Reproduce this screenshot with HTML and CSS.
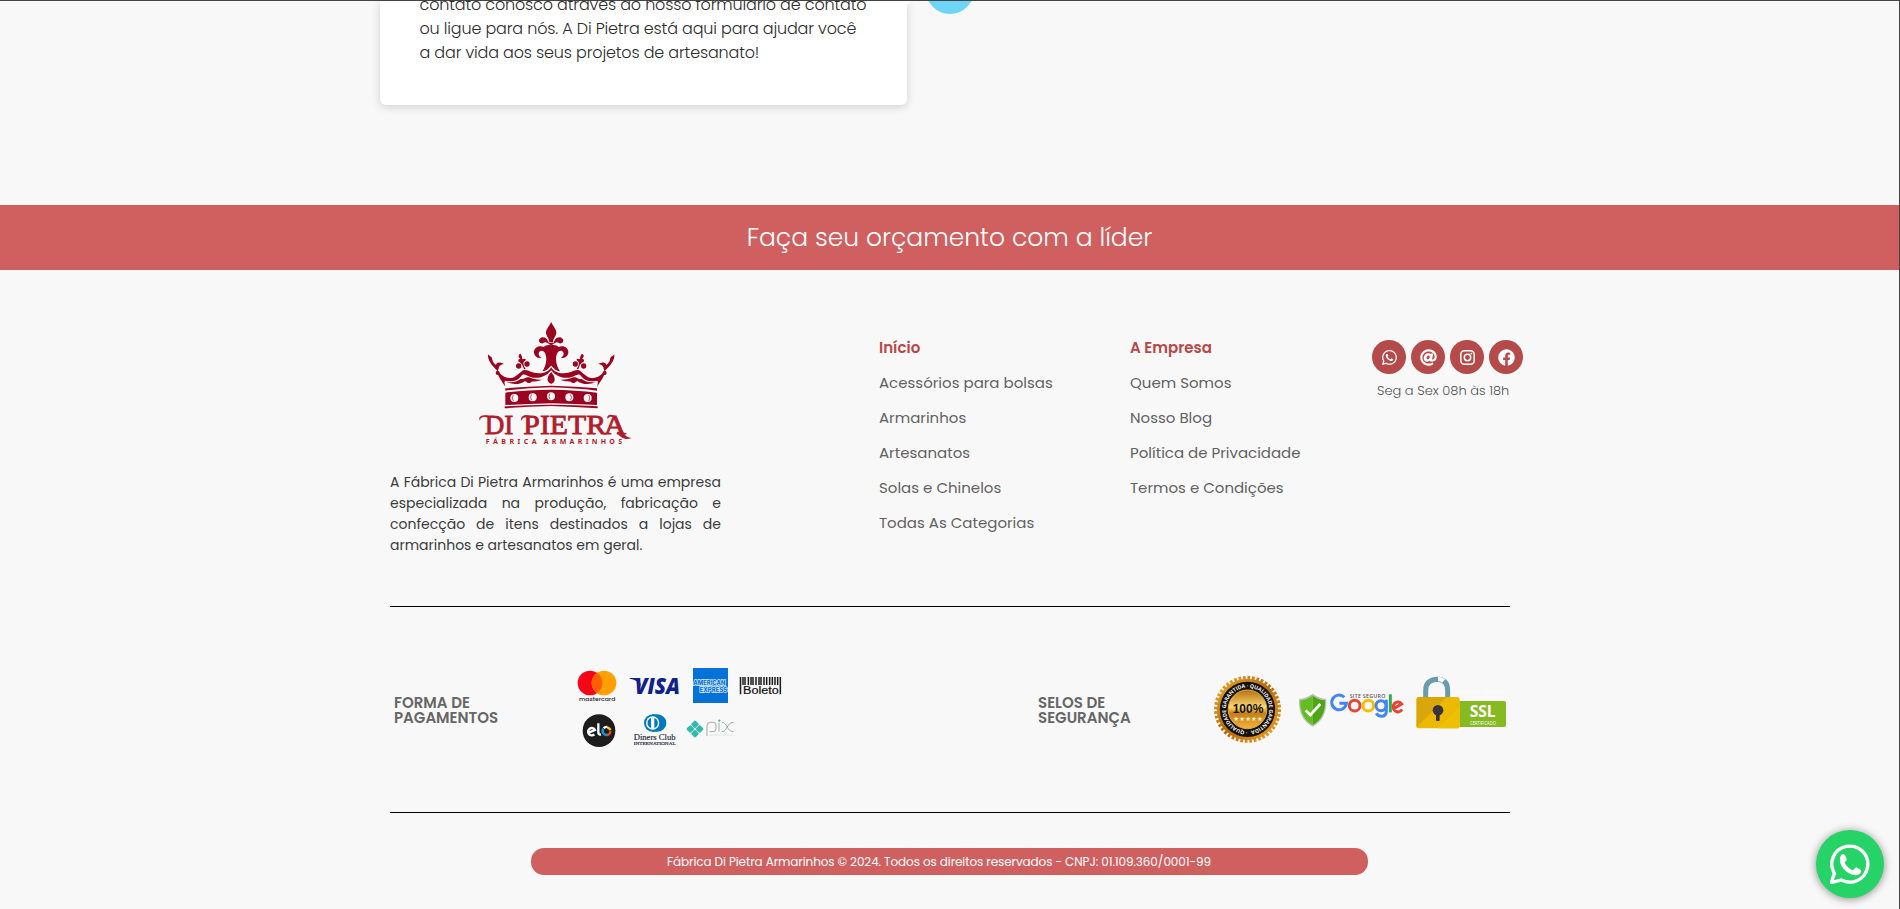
FILE: index.html
```html
<!DOCTYPE html>
<html lang="pt-BR">
<head>
<meta charset="utf-8">
<title>Di Pietra Armarinhos</title>
<link rel="stylesheet" href="styles.css">
</head>
<body>
<div class="page">
  <section class="timeline">
    <div class="card">
      <p>contato conosco através do nosso formulário de contato<br>ou ligue para nós. A Di Pietra está aqui para ajudar você<br>a dar vida aos seus projetos de artesanato!</p>
    </div>
    <i class="arrow"></i>
    <i class="dot"></i>
  </section>

  <section class="banner"><h2>Faça seu orçamento com a líder</h2></section>

  <footer class="footer">
    <div class="top">
      <div class="about">
        <svg class="logo" viewBox="0 0 570 450" width="190" height="150">
          <defs>
            <g id="half" fill="#9a0420">
              <path d="M274 36C266 50 257 60 258 70C260 80 267 84 268 97H274Z"/>
              <path d="M274 106C266 104 262 96 256 97C250 98 248 103 240 98C234 93 238 84 247 82C259 81 263 91 266 98L274 99Z"/>
              <path d="M274 106C264 104 256 106 252 111C240 105 224 110 222 124C221 138 232 147 245 143C235 140 233 128 241 123C252 118 259 132 259 148C258 164 254 174 247 184C259 183 266 176 274 166Z"/>
              <path d="M274 186C264 195 261 207 264 214C266 219 270 221 274 221Z"/>
              <path d="M274 172C266 184 254 190 236 190C214 190 203 177 190 181C180 186 172 199 158 203C137 207 124 198 113 181L109 184C114 196 124 214 136 230C133 220 132 214 136 212C154 216 172 214 182 200C192 185 202 201 220 203C240 205 258 200 274 180Z"/>
              <path d="M183 206C192 210 196 199 207 202C220 207 230 210 246 209C230 216 214 212 209 218C201 221 198 210 192 215C178 224 156 224 140 216C158 218 172 215 183 206Z"/>
              <path d="M113 183C96 168 82 150 84 133C91 142 96 138 97 149C98 155 102 160 108 165C109 157 118 154 132 162C120 164 116 170 116 177Z"/>
              <circle cx="113" cy="189" r="6"/>
              <circle cx="176" cy="168" r="8"/><circle cx="201" cy="162" r="8"/><circle cx="207" cy="212" r="7"/>
              <path d="M192 178C188 164 185 160 176 155C172 149 178 145 182 148C175 140 173 136 181 131C188 139 185 142 188 148C196 143 201 149 194 153C187 159 191 166 197 177Z"/>
              <path d="M136 235Q200 229 274 227V232Q200 234 136 242Z"/>
              <path d="M136 248Q200 240 274 239V280Q200 282 136 285Z"/>
              <path d="M134 289Q200 285 274 284V288Q200 290 134 295Z"/>
            </g>
          </defs>
          <use href="#half"/><use href="#half" transform="translate(547 0) scale(-1 1)"/>
          <g fill="#f8f8f8"><circle cx="163" cy="264" r="12"/><circle cx="218" cy="262" r="12"/><circle cx="273" cy="259" r="12"/><circle cx="328" cy="262" r="12"/><circle cx="383" cy="264" r="12"/></g>
          <g fill="none" stroke="#9a0420" stroke-width="2"><path d="M160 255q-7 9 0 18M215 253q-7 9 0 18M270 250q-7 9 0 18M331 253q7 9 0 18M386 255q7 9 0 18"/></g>
          <g fill="#b21c2a" font-family="Liberation Serif, serif">
            <g font-size="84" stroke="#b21c2a" stroke-width="2.500">
              <text x="74" y="373" textLength="86" lengthAdjust="spacingAndGlyphs">DI</text>
              <text x="190" y="373" textLength="248" lengthAdjust="spacingAndGlyphs">PIETR</text>
              <text x="432" y="373" textLength="66" lengthAdjust="spacingAndGlyphs">A</text>
            </g>
            <path d="M84 317C66 312 52 320 60 332C60 322 70 319 84 321ZM208 317C192 312 178 322 185 332C188 322 196 319 208 321ZM466 318C450 311 438 315 443 327C448 318 456 320 466 324ZM470 366C484 388 500 390 515 384C500 382 492 374 488 362Z"/>
            <text x="77" y="402" font-size="21" font-weight="700" font-family="Noto Sans, sans-serif" textLength="153">FÁBRICA</text>
            <text x="251" y="402" font-size="21" font-weight="700" font-family="Noto Sans, sans-serif" textLength="235">ARMARINHOS</text>
          </g>
        </svg>
        <p>A Fábrica Di Pietra Armarinhos é uma empresa especializada na produção, fabricação e confecção de itens destinados a lojas de armarinhos e artesanatos em geral.</p>
      </div>
      <ul class="links first">
        <li class="head">Início</li>
        <li>Acessórios para bolsas</li>
        <li>Armarinhos</li>
        <li>Artesanatos</li>
        <li>Solas e Chinelos</li>
        <li>Todas As Categorias</li>
      </ul>
      <ul class="links second">
        <li class="head">A Empresa</li>
        <li>Quem Somos</li>
        <li>Nosso Blog</li>
        <li>Política de Privacidade</li>
        <li>Termos e Condições</li>
      </ul>
      <div class="contact">
        <div class="social">
          <a><svg viewBox="0 0 448 512" width="15" height="17"><path d="M380.900 97.100C339 55.100 283.200 32 223.900 32c-122.400 0-222 99.600-222 222 0 39.100 10.200 77.300 29.600 111L0 480l117.700-30.900c32.400 17.700 68.900 27 106.100 27h.1c122.300 0 224.100-99.600 224.100-222 0-59.300-25.200-115-67.100-157zm-157 341.600c-33.200 0-65.700-8.900-94-25.700l-6.700-4-69.800 18.300L72 359.200l-4.400-7c-18.500-29.400-28.200-63.300-28.200-98.200 0-101.700 82.800-184.500 184.600-184.500 49.300 0 95.600 19.200 130.400 54.100 34.800 34.900 56.200 81.200 56.100 130.500 0 101.800-84.900 184.600-186.600 184.600zm101.200-138.200c-5.500-2.800-32.800-16.200-37.900-18-5.100-1.900-8.800-2.800-12.500 2.800-3.700 5.600-14.300 18-17.600 21.800-3.200 3.700-6.500 4.200-12 1.400-32.600-16.300-54-29.100-75.500-66-5.700-9.800 5.700-9.100 16.300-30.300 1.800-3.700.9-6.900-.5-9.700-1.400-2.800-12.500-30.100-17.100-41.200-4.500-10.800-9.100-9.300-12.500-9.500-3.200-.2-6.900-.2-10.600-.2-3.700 0-9.700 1.400-14.800 6.900-5.100 5.600-19.400 19-19.400 46.300 0 27.300 19.900 53.700 22.600 57.400 2.800 3.700 39.100 59.700 94.800 83.800 35.200 15.200 49 16.500 66.600 13.900 10.700-1.600 32.800-13.400 37.400-26.400 4.600-13 4.600-24.100 3.200-26.400-1.300-2.500-5-3.900-10.500-6.600z"/></svg></a>
          <a><svg viewBox="0 0 512 512" width="17" height="17"><path d="M256 8C118.941 8 8 118.919 8 256c0 137.058 110.919 248 248 248 48.154 0 95.342-14.140 135.408-40.223 12.005-7.815 14.625-24.288 5.552-35.372l-10.177-12.433c-7.671-9.371-21.179-11.667-31.373-5.129C325.920 429.757 291.314 440 256 440c-101.458 0-184-82.542-184-184S154.542 72 256 72c100.139 0 184 57.619 184 160 0 38.786-21.093 79.742-58.170 83.693-17.349-.454-16.910-12.857-13.476-30.024l23.433-121.110C394.653 149.750 383.308 136 368.225 136h-44.981a13.518 13.518 0 0 0-13.432 11.993l-.01.092c-14.697-17.901-40.448-21.775-59.971-21.775-74.580 0-137.831 62.234-137.831 151.460 0 65.303 36.785 105.870 96 105.870 26.984 0 57.369-15.637 74.991-38.333 9.522 34.104 40.613 34.104 70.671 34.104C462.609 379.410 504 307.798 504 232 504 95.653 394.023 8 256 8zm-21.680 304.430c-22.249 0-36.070-15.623-36.070-40.771 0-44.993 30.779-72.729 58.624-72.729 22.292 0 35.601 15.241 35.601 40.770 0 45.061-33.875 72.730-58.155 72.730z"/></svg></a>
          <a><svg viewBox="0 0 17 17" width="17" height="17"><rect x="1.800" y="1.800" width="13.400" height="13.400" rx="3.700" fill="none" stroke="#fff" stroke-width="1.500"/><circle cx="8.500" cy="8.500" r="3.200" fill="none" stroke="#fff" stroke-width="1.500"/><circle cx="12.400" cy="4.600" r=".95"/></svg></a>
          <a><svg viewBox="0 0 512 512" width="17" height="17"><path d="M504 256C504 119 393 8 256 8S8 119 8 256c0 123.780 90.690 226.380 209.250 245V327.690h-63V256h63v-54.640c0-62.150 37-96.480 93.670-96.480 27.140 0 55.520 4.840 55.520 4.840v61h-31.280c-30.800 0-40.410 19.120-40.410 38.730V256h68.780l-11 71.690h-57.780V501C413.310 482.380 504 379.780 504 256z"/></svg></a>
        </div>
        <p>Seg a Sex 08h às 18h</p>
      </div>
    </div>

    <div class="trust">
      <h4 class="pay">FORMA DE<br>PAGAMENTOS</h4>
      <div class="methods">
        <div class="row">
          <svg viewBox="45 30 144 120" width="48" height="40"><circle cx="90" cy="84" r="37" fill="#f60519"/><circle cx="132" cy="84" r="37" fill="#ffa000"/><path d="M111 53.500a37 37 0 0 1 0 61a37 37 0 0 1 0-61" fill="#ff5f00"/><text x="57" y="137" font-size="17" font-weight="500" font-family="Poppins" textLength="109" lengthAdjust="spacingAndGlyphs" fill="#222">mastercard</text></svg>
          <svg viewBox="189 30 189 120" width="63" height="40"><g fill="#10228a"><text x="224" y="116" font-size="67" font-weight="800" font-style="italic" font-family="Open Sans" textLength="136" lengthAdjust="spacingAndGlyphs">VISA</text><path d="M209 69H237L244 96C239 83 228 74 209 71Z"/></g></svg>
          <svg viewBox="378 30 144 120" width="48" height="40"><rect x="399" y="39" width="105" height="105" fill="#0672d7"/><g font-family="Inter" font-weight="800" font-size="18" fill="#0672d7" stroke="#d8edff" stroke-width="4" paint-order="stroke"><text x="400" y="89" textLength="96" lengthAdjust="spacingAndGlyphs">AMERICAN</text><text x="419" y="111" textLength="83" lengthAdjust="spacingAndGlyphs">EXPRESS</text></g></svg>
          <svg viewBox="522 30 156 120" width="52" height="40"><path d="M541.500 66v52M549 66v24M555 66v24M565 66v24M573 66v24M579 66v24M588 66v24M597 66v24M603 66v24M612 66v24M620 66v24M629 66v24M637 66v24M645 66v24M653 66v24M661 66v52" stroke="#1b1b1b" stroke-width="4.500"/><text x="549" y="117" font-size="34" font-family="Liberation Sans" textLength="107" lengthAdjust="spacingAndGlyphs" fill="#111" stroke="#111" stroke-width=".7">Boleto</text></svg>
        </div>
        <div class="row">
          <svg viewBox="45 165 150 120" width="50" height="40"><circle cx="117" cy="227" r="49" fill="#1d1d1d"/><g fill="none" stroke-width="7"><path d="M86 233L105 225A11 11 0 1 0 103 238M115 205V232Q115 240 123 238" stroke="#fff"/><path d="M131 220A12 12 0 0 1 142 216" stroke="#fff"/><path d="M141 217A12 12 0 0 1 151 226" stroke="#ffcb05"/><path d="M151 228A12 12 0 0 1 140 240" stroke="#ef4123"/><path d="M141 240A12 12 0 0 1 130 221" stroke="#00a4e0"/></g></svg>
          <svg viewBox="195 165 177 120" width="59" height="40"><path d="M277 178H291A27 25 0 0 1 291 230H277Z" fill="#0079be"/><ellipse cx="279" cy="204" rx="27" ry="26" fill="#0079be"/><circle cx="278" cy="204" r="20" fill="#f8f8f8"/><path d="M273 189a16 16 0 0 0 0 30zM283 189a16 16 0 0 1 0 30z" fill="#0079be"/><g font-family="Liberation Serif" fill="#202a3a" stroke="#202a3a" stroke-width=".5"><text x="221" y="254" font-size="27" textLength="126" lengthAdjust="spacingAndGlyphs">Diners Club</text><text x="221" y="270" font-size="14" textLength="126" lengthAdjust="spacingAndGlyphs">INTERNATIONAL</text></g></svg>
          <svg viewBox="372 165 168 120" width="56" height="40"><g fill="#2fbaad"><rect x="396" y="199" width="18" height="18" rx="4" transform="rotate(45 405 208)"/><rect x="396" y="227" width="18" height="18" rx="4" transform="rotate(45 405 236)"/><rect x="382" y="213" width="18" height="18" rx="4" transform="rotate(45 391 222)"/><rect x="410" y="213" width="18" height="18" rx="4" transform="rotate(45 419 222)"/></g><path d="M441 243V212Q441 202 451 202H460Q468 202 468 210V221Q468 230 460 230H449M477 204V230M485 202Q492 201 496 207L506 223Q512 230 521 230M485 230Q492 231 496 225L506 209Q512 202 521 202" fill="none" stroke="#a5a8a9" stroke-width="3"/><path d="M474 197l4-4 4 4-4 4z" fill="#2fbaad"/><path d="M449 240h72" stroke="#cdd0d0" stroke-width="2" stroke-dasharray="3 1"/></svg>
        </div>
      </div>
      <h4 class="safe">SELOS DE<br>SEGURANÇA</h4>
      <div class="seals">
        <svg viewBox="30 0 240 285" width="80" height="95">
          <defs>
            <linearGradient id="gold" x2="1" y2="1"><stop offset="0" stop-color="#f0a822"/><stop offset=".5" stop-color="#b4690d"/><stop offset="1" stop-color="#f2a61e"/></linearGradient>
            <linearGradient id="disc" x2="0" y2="1"><stop offset="0" stop-color="#b8700f"/><stop offset=".45" stop-color="#f8d876"/><stop offset=".6" stop-color="#c67d17"/><stop offset="1" stop-color="#f0b53b"/></linearGradient>
            <path id="ring" d="M142.500 213A65 65 0 1 1 143 213"/>
          </defs>
          <circle cx="142.500" cy="148" r="92" fill="url(#gold)"/>
          <circle cx="142.500" cy="148" r="94" fill="none" stroke="url(#gold)" stroke-width="13" stroke-dasharray="8 5.400"/>
          <circle cx="142.500" cy="148" r="83" fill="#16110b"/><circle cx="142.500" cy="148" r="58" fill="url(#disc)" stroke="#e5aa35" stroke-width="3"/>
          <text font-family="Open Sans" font-size="16" font-weight="700" fill="#eee" textLength="398"><textPath href="#ring">· QUALIDADE GARANTIDA · QUALIDADE GARANTIDA</textPath></text>
          <text x="98" y="160" font-family="Liberation Sans" font-weight="700" font-size="41" textLength="92" lengthAdjust="spacingAndGlyphs" fill="#111">100%</text>
          <text x="100" y="183" font-family="DejaVu Sans" font-size="19" textLength="88" fill="#fff3cf">★★★★★</text>
        </svg>
        <svg viewBox="270 0 360 285" width="120" height="95">
          <path d="M338 101Q358 115 379 117Q382 177 338 200Q294 177 297 117Q318 115 338 101Z" fill="#b9c0b5"/><path d="M338 107Q355 119 375 121Q377 174 338 195Z" fill="#4ca713"/><path d="M338 107Q321 119 301 121Q299 174 338 195Z" fill="#65bd24"/><path d="M317 151L331 165L361 132" fill="none" stroke="#fff" stroke-width="8"/>
          <g fill="none" stroke-width="9"><path d="M433 112A22 22 0 1 0 439 130H418" stroke="#4285f4"/><circle cx="464" cy="137" r="16" stroke="#ea4335"/><circle cx="505" cy="137" r="16" stroke="#fbbc05"/><circle cx="543" cy="137" r="15" stroke="#4285f4"/><path d="M559 119V153Q559 169 544 169Q534 169 529 160" stroke="#4285f4"/><path d="M571 103V157" stroke="#34a853"/><path d="M582 145L605 132A14 15 0 1 0 606 148" stroke="#ea4335"/></g>
          <text x="449" y="113" font-family="Open Sans" font-size="16" font-weight="600" textLength="107" fill="#555">SITE SEGURO</text>
        </svg>
        <svg viewBox="630 0 300 285" width="100" height="95">
          <path d="M677 115V92Q677 59 713 58Q743 59 743 92V115" fill="none" stroke="#6a9cae" stroke-width="15"/><path d="M714 57Q724 57 731 63" fill="none" stroke="#fff" stroke-width="13"/>
          <path d="M778 123H912Q918 123 918 129V195Q918 201 912 201H778Z" fill="#87ba22"/>
          <rect x="649" y="111" width="130" height="94" rx="8" fill="#edb900"/><path d="M657 111H741L650 202V119Q650 111 657 111Z" fill="#d9a70c"/><path d="M715 204L779 140V197Q779 205 771 205H715Z" fill="#efbf05"/>
          <circle cx="714" cy="151" r="16" fill="#38343b"/><rect x="708" y="160" width="11" height="23" rx="3" fill="#38343b"/>
          <g fill="#fff" font-family="Open Sans"><text x="764" y="101" font-size="18" opacity=".8" textLength="150">SITE 100% SEGURO</text><text x="809" y="172" font-size="50" font-weight="700" textLength="78" lengthAdjust="spacingAndGlyphs">SSL</text><text x="810" y="194" font-size="14" textLength="78" lengthAdjust="spacingAndGlyphs">CERTIFICADO</text></g>
        </svg>
      </div>
    </div>

    <div class="copy">Fábrica Di Pietra Armarinhos © 2024. Todos os direitos reservados - CNPJ: 01.109.360/0001-99</div>
  </footer>

  <a class="fab"><svg viewBox="0 0 120 120" width="40" height="40"><path d="M13 88A54 54 0 1 1 34 108L4 116Z" fill="none" stroke="#fff" stroke-width="10" stroke-linejoin="miter"/><path d="M33 34C38 28 44 30 46 35L50 45C51 49 46 53 44 56C50 68 59 75 69 79C73 76 76 69 81 71L92 77C96 80 92 88 87 91C76 98 62 92 51 84C39 75 25 57 31 39Z" fill="#fff"/></svg></a>
</div>
</body>
</html>
```

FILE: styles.css
```css
* { box-sizing: border-box; }
body { margin: 0; background: #f8f8f8; font-family: Poppins, sans-serif; color: #333; }
h2, h4, p, ul { margin: 0; padding: 0; font-weight: 400; }
ul { list-style: none; }
svg { display: block; flex: none; }
.page { position: relative; width: 1900px; height: 909px; overflow: hidden; border-top: 1px solid #444; border-right: 1px solid #444; }
.timeline { position: relative; height: 204px; overflow: hidden; }
.card { width: 527px; height: 104px; margin-left: 380px; padding-left: 39.5px; background: #fff; border-radius: 0 0 6px 6px; box-shadow: 0 2px 10px rgba(0,0,0,.16); }
.card p { float: left; margin-top: -8px; font-size: 16px; line-height: 24px; font-weight: 300; letter-spacing: -.16px; white-space: nowrap; color: #2c2c2c; }
.arrow { position: absolute; left: 907px; top: 0; border-top: 4px solid #fff; border-right: 4px solid transparent; }
.dot { position: absolute; left: 926px; top: -35px; width: 48px; height: 48px; border-radius: 50%; background: #6dd5f7; }
.banner { height: 65px; display: flex; align-items: center; justify-content: center; background: #d06060; color: #fff; }
.banner h2 { font-size: 25px; font-weight: 300; white-space: nowrap; }
.footer { width: 1120px; margin: 0 auto 0 390px; }
.top { display: flex; height: 337px; border-bottom: 1px solid #000; }
.top > * { flex: none; }
.about { width: 331px; padding-top: 40px; }
.logo { margin-left: 70px; }
.about p { margin-top: 12px; font-size: 14px; line-height: 21px; text-align: justify; color: #3c3c3c; }
.links { padding-top: 60px; font-size: 15px; line-height: 35px; color: #626262; white-space: nowrap; }
.first { width: 251px; margin-left: 158px; }
.second { width: 241px; }
.head { color: #b74848; font-weight: 600; }
.contact { padding-top: 70px; margin-left: 1px; }
.social { display: flex; gap: 5px; }
.social a { width: 34px; height: 34px; flex: none; border-radius: 50%; background: #b54a4a; display: flex; align-items: center; justify-content: center; }
.social svg { fill: #fff; }
.contact p { margin: 7px 0 0 5px; font-size: 13px; line-height: 20px; font-weight: 300; color: #555; white-space: nowrap; }
.trust { display: flex; height: 206px; border-bottom: 1px solid #000; }
.trust h4 { padding-top: 88px; font-size: 15px; line-height: 15px; font-weight: 600; color: #666; white-space: nowrap; }
.pay { width: 185px; padding-left: 4px; }
.methods { width: 463px; padding-top: 58px; }
.row { display: flex; height: 45px; }
.safe { width: 172px; }
.seals { display: flex; padding-top: 53px; }
.copy { width: 837px; height: 27px; margin: 35px 0 0 141px; padding-right: 21px; border-radius: 13px; background: #d06060; color: #fff; display: flex; align-items: center; justify-content: center; font-size: 12px; letter-spacing: -.1px; white-space: nowrap; }
.fab { position: absolute; left: 1816px; top: 829px; width: 68px; height: 68px; border-radius: 50%; background: #25d366; box-shadow: 0 1px 9px rgba(0,0,0,.45); display: flex; align-items: center; justify-content: center; }
```
